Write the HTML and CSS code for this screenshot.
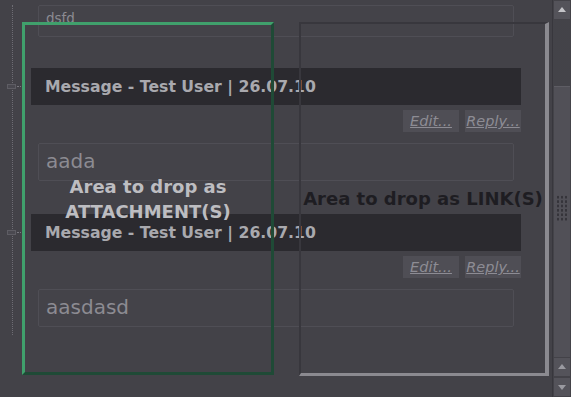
FILE: index.html
```html
<!DOCTYPE html>
<html lang="en">
<head>
  <meta charset="UTF-8">
  <title>Messages</title>
  <link rel="stylesheet" href="styles.css">
</head>
<body>
  <div class="window">
    <div class="viewport">
      <div class="thread">
        <div class="note note-short">dsfd</div>

        <div class="message">
          <div class="head">Message - Test User | 26.07.10</div>
          <div class="actions">
            <a class="btn">Edit...</a>
            <a class="btn">Reply...</a>
          </div>
          <div class="note">aada</div>
        </div>

        <div class="message">
          <div class="head">Message - Test User | 26.07.10</div>
          <div class="actions">
            <a class="btn">Edit...</a>
            <a class="btn">Reply...</a>
          </div>
          <div class="note">aasdasd</div>
        </div>
      </div>

      <!-- drop targets shown while dragging -->
      <div class="drop drop-attach"><span>Area to drop as<br>ATTACHMENT(S)</span></div>
      <div class="drop drop-link"><span>Area to drop as LINK(S)</span></div>
    </div>

    <div class="scrollbar">
      <div class="sb-btn up"></div>
      <div class="sb-track">
        <div class="sb-thumb"><div class="grip"></div></div>
      </div>
      <div class="sb-btn up dim"></div>
      <div class="sb-btn down dim"></div>
    </div>
  </div>
</body>
</html>
```

FILE: styles.css
```css
html, body {
  margin: 0;
  padding: 0;
  height: 100%;
  overflow: hidden;
  background: #434248;
  font-family: "DejaVu Sans", Verdana, sans-serif;
}

.window {
  display: flex;
  height: 397px;
}

.viewport {
  position: relative;
  flex: 1;
}

/* message tree */
.thread {
  margin-left: 12px;
  padding: 0 0 8px 18px;
  border-left: 1px dotted #6d6c73;
  width: 490px;
}

.note {
  margin: 11px 7px 0;
  height: 36px;
  padding: 0 7px;
  border: 1px solid #4f4e55;
  border-radius: 2px;
  background: #444349;
  color: #8c8b92;
  font-size: 20px;
  line-height: 35px;
}

.note-short {
  margin-top: 5px;
  height: 30px;
  font-size: 13.5px;
  line-height: 24px;
}

.message {
  margin-top: 31px;
}

.message + .message {
  margin-top: 33px;
}

.head {
  position: relative;
  height: 37px;
  padding-left: 14px;
  background: #2b2a2f;
  color: #a9a9ae;
  font-size: 15.7px;
  font-weight: bold;
  line-height: 37px;
  white-space: nowrap;
}

/* collapse box on the tree line */
.head::before {
  content: "";
  position: absolute;
  left: -24px;
  top: 16px;
  width: 7px;
  height: 3px;
  border: 1px solid #5e5d64;
  background: #4a4950;
}

.head::after {
  content: "";
  position: absolute;
  left: -14px;
  top: 18px;
  width: 8px;
  border-top: 1px dotted #7a7980;
}

.actions {
  display: flex;
  justify-content: flex-end;
  gap: 6px;
  margin-top: 5px;
}

.btn {
  width: 56px;
  height: 22px;
  background: #4f4e55;
  color: #8d8c94;
  font-size: 14.5px;
  font-style: italic;
  line-height: 23px;
  text-align: center;
  text-decoration: underline;
}

/* drop zones */
.drop {
  position: absolute;
  top: 22px;
  box-sizing: border-box;
  display: flex;
  align-items: center;
  justify-content: center;
  text-align: center;
  font-size: 18px;
  font-weight: bold;
  line-height: 25px;
}

.drop-attach {
  left: 22px;
  width: 252px;
  height: 353px;
  border: 3px solid;
  border-color: #40a06c #1f4a36 #1f4a36 #40a06c;
  color: #bdbdc1;
}

.drop-link {
  left: 299px;
  width: 250px;
  height: 354px;
  border-style: solid;
  border-width: 2px 4px 3px 2px;
  border-color: #38373d #8b8a90 #8b8a90 #38373d;
  color: #1e1d22;
}

/* scrollbar */
.scrollbar {
  display: flex;
  flex-direction: column;
  width: 18px;
  border-left: 1px solid #38373d;
  background: #434248;
}

.sb-btn {
  position: relative;
  height: 18px;
  margin: 1px;
  background: #54535a;
}

.sb-btn::after {
  content: "";
  position: absolute;
  left: 4px;
  top: 6px;
  border-left: 4px solid transparent;
  border-right: 4px solid transparent;
}

.up::after {
  border-bottom: 5px solid #c4c4c8;
}

.down::after {
  top: 7px;
  border-top: 5px solid #9a9aa0;
}

.up.dim::after {
  border-bottom-color: #9a9aa0;
}

.sb-track {
  flex: 1;
  padding-top: 66px;
  background-color: #3e3d43;
  background-image: radial-gradient(circle, #47464c 0.6px, transparent 0.9px);
  background-size: 2px 2px;
  display: flex;
  flex-direction: column;
}

.sb-thumb {
  flex: 1;
  margin: 0 1px;
  background: #515057;
  border-top: 1px solid #5e5d64;
  display: flex;
  align-items: center;
  justify-content: center;
}

.grip {
  width: 12px;
  height: 26px;
  margin-top: -28px;
  background-image: radial-gradient(circle, #35343a 1px, transparent 1.3px);
  background-size: 4px 4.4px;
}
```
